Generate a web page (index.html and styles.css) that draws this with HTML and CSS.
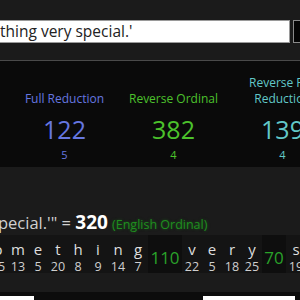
FILE: index.html
```html
<!DOCTYPE html>
<html>
<head>
<meta charset="utf-8">
<link rel="stylesheet" href="styles.css">
</head>
<body>
<div class="top">
  <div class="inputrow">
    <div class="field"><span class="fieldtext">thing very special.'</span></div>
    <div class="btn"></div>
  </div>
</div>
<div class="ciphers">
  <div class="col c-blue">
    <div class="cname">Full Reduction</div>
    <div class="cval">122</div>
    <div class="csub">5</div>
  </div>
  <div class="col c-green">
    <div class="cname">Reverse Ordinal</div>
    <div class="cval">382</div>
    <div class="csub">4</div>
  </div>
  <div class="col c-cyan">
    <div class="cname">Reverse Full Reduction</div>
    <div class="cval">139</div>
    <div class="csub">4</div>
  </div>
</div>
<div class="result">
  <div class="phrase"><span class="ptext">pecial.'" = </span><span class="total">320</span> <span class="pcipher">(English Ordinal)</span></div>
  <div class="breakdown">
    <div class="word">
      <div class="ch"><span class="l">o</span><span class="n">15</span></div>
      <div class="ch"><span class="l">m</span><span class="n">13</span></div>
      <div class="ch"><span class="l">e</span><span class="n">5</span></div>
      <div class="ch"><span class="l">t</span><span class="n">20</span></div>
      <div class="ch"><span class="l">h</span><span class="n">8</span></div>
      <div class="ch"><span class="l">i</span><span class="n">9</span></div>
      <div class="ch"><span class="l">n</span><span class="n">14</span></div>
      <div class="ch"><span class="l">g</span><span class="n">7</span></div>
    </div>
    <div class="sum">110</div>
    <div class="word">
      <div class="ch"><span class="l">v</span><span class="n">22</span></div>
      <div class="ch"><span class="l">e</span><span class="n">5</span></div>
      <div class="ch"><span class="l">r</span><span class="n">18</span></div>
      <div class="ch"><span class="l">y</span><span class="n">25</span></div>
    </div>
    <div class="sum sum-sm">70</div>
    <div class="word">
      <div class="ch"><span class="l">s</span><span class="n">19</span></div>
      <div class="ch"><span class="l">p</span><span class="n">16</span></div>
    </div>
  </div>
</div>
<div class="bottom">
  <div class="box box1"></div>
  <div class="box box2"></div>
</div>
</body>
</html>
```

FILE: styles.css
```css
html, body {
  margin: 0;
  padding: 0;
  background: #1b1b1b;
  overflow: hidden;
  width: 300px;
  height: 300px;
  font-family: "Open Sans", "Noto Sans", sans-serif;
}
.top {
  height: 61px;
  background: #1b1b1b;
  border-bottom: 1px solid #4a4a4a;
  box-sizing: border-box;
  padding-top: 20px;
}
.inputrow {
  display: flex;
  gap: 3px;
  height: 23px;
}
.field {
  width: 290px;
  flex: none;
  box-sizing: border-box;
  background: #fff;
  border: 1px solid #9a9a9a;
  border-left: none;
  overflow: hidden;
  white-space: nowrap;
  font-size: 15.5px;
  line-height: 21px;
  color: #222;
}
.btn {
  width: 20px;
  flex: none;
  box-sizing: border-box;
  background: #050505;
  border: 1px solid #8a8a8a;
}
.ciphers {
  height: 106px;
  background: #0a0a0a;
  display: flex;
  align-items: flex-start;
  padding-left: 10px;
  box-sizing: border-box;
  padding-top: 14px;
}
.col {
  width: 109px;
  flex: none;
  text-align: center;
  display: flex;
  flex-direction: column;
  align-items: center;
}
.cname {
  font-size: 12px;
  line-height: 16px;
  height: 32px;
  display: flex;
  align-items: flex-end;
  justify-content: center;
  width: 90px;
}
.cval {
  font-size: 25px;
  line-height: 30px;
  margin-top: 7px;
}
.csub {
  font-size: 11px;
  line-height: 14px;
  margin-top: 4px;
}
.c-blue { color: #6677e0; }
.c-green { color: #4cc22c; }
.c-cyan { color: #62c8c8; }
.result {
  height: 125px;
  background: #1b1b1b;
  padding-top: 44px;
  box-sizing: border-box;
}
.phrase {
  white-space: nowrap;
  margin-left: -2px;
  height: 22px;
  line-height: 22px;
}
.ptext {
  color: #d0d0d0;
  font-size: 16.5px;
}
.total {
  color: #fff;
  font-weight: 700;
  font-size: 19px;
}
.pcipher {
  color: #1f8f1f;
  font-size: 12.5px;
  text-shadow: 0 0 3px rgba(30, 160, 30, 0.5);
}
.breakdown {
  display: flex;
  margin-top: 2px;
  margin-left: -12px;
  height: 38px;
  background: #0e0e0e;
  white-space: nowrap;
}
.word {
  display: flex;
  flex: none;
  background: #141414;
}
.ch {
  width: 20px;
  flex: none;
  display: flex;
  flex-direction: column;
  align-items: center;
}
.l {
  color: #dedede;
  font-size: 15px;
  line-height: 20px;
  margin-top: 4px;
}
.n {
  color: #cfcfcf;
  font-size: 12.5px;
  line-height: 15px;
}
.sum {
  flex: none;
  width: 34px;
  text-align: center;
  color: #2aa22a;
  font-size: 17px;
  line-height: 38px;
  padding-top: 4px;
  box-sizing: border-box;
}
.sum-sm { width: 24px; }
.bottom {
  height: 8px;
  background: #0c0c0c;
  display: flex;
  padding-top: 4px;
  box-sizing: border-box;
}
.box {
  background: #fff;
  height: 10px;
}
.box1 { width: 34px; }
.box2 { width: 92px; margin-left: 169px; }
```
